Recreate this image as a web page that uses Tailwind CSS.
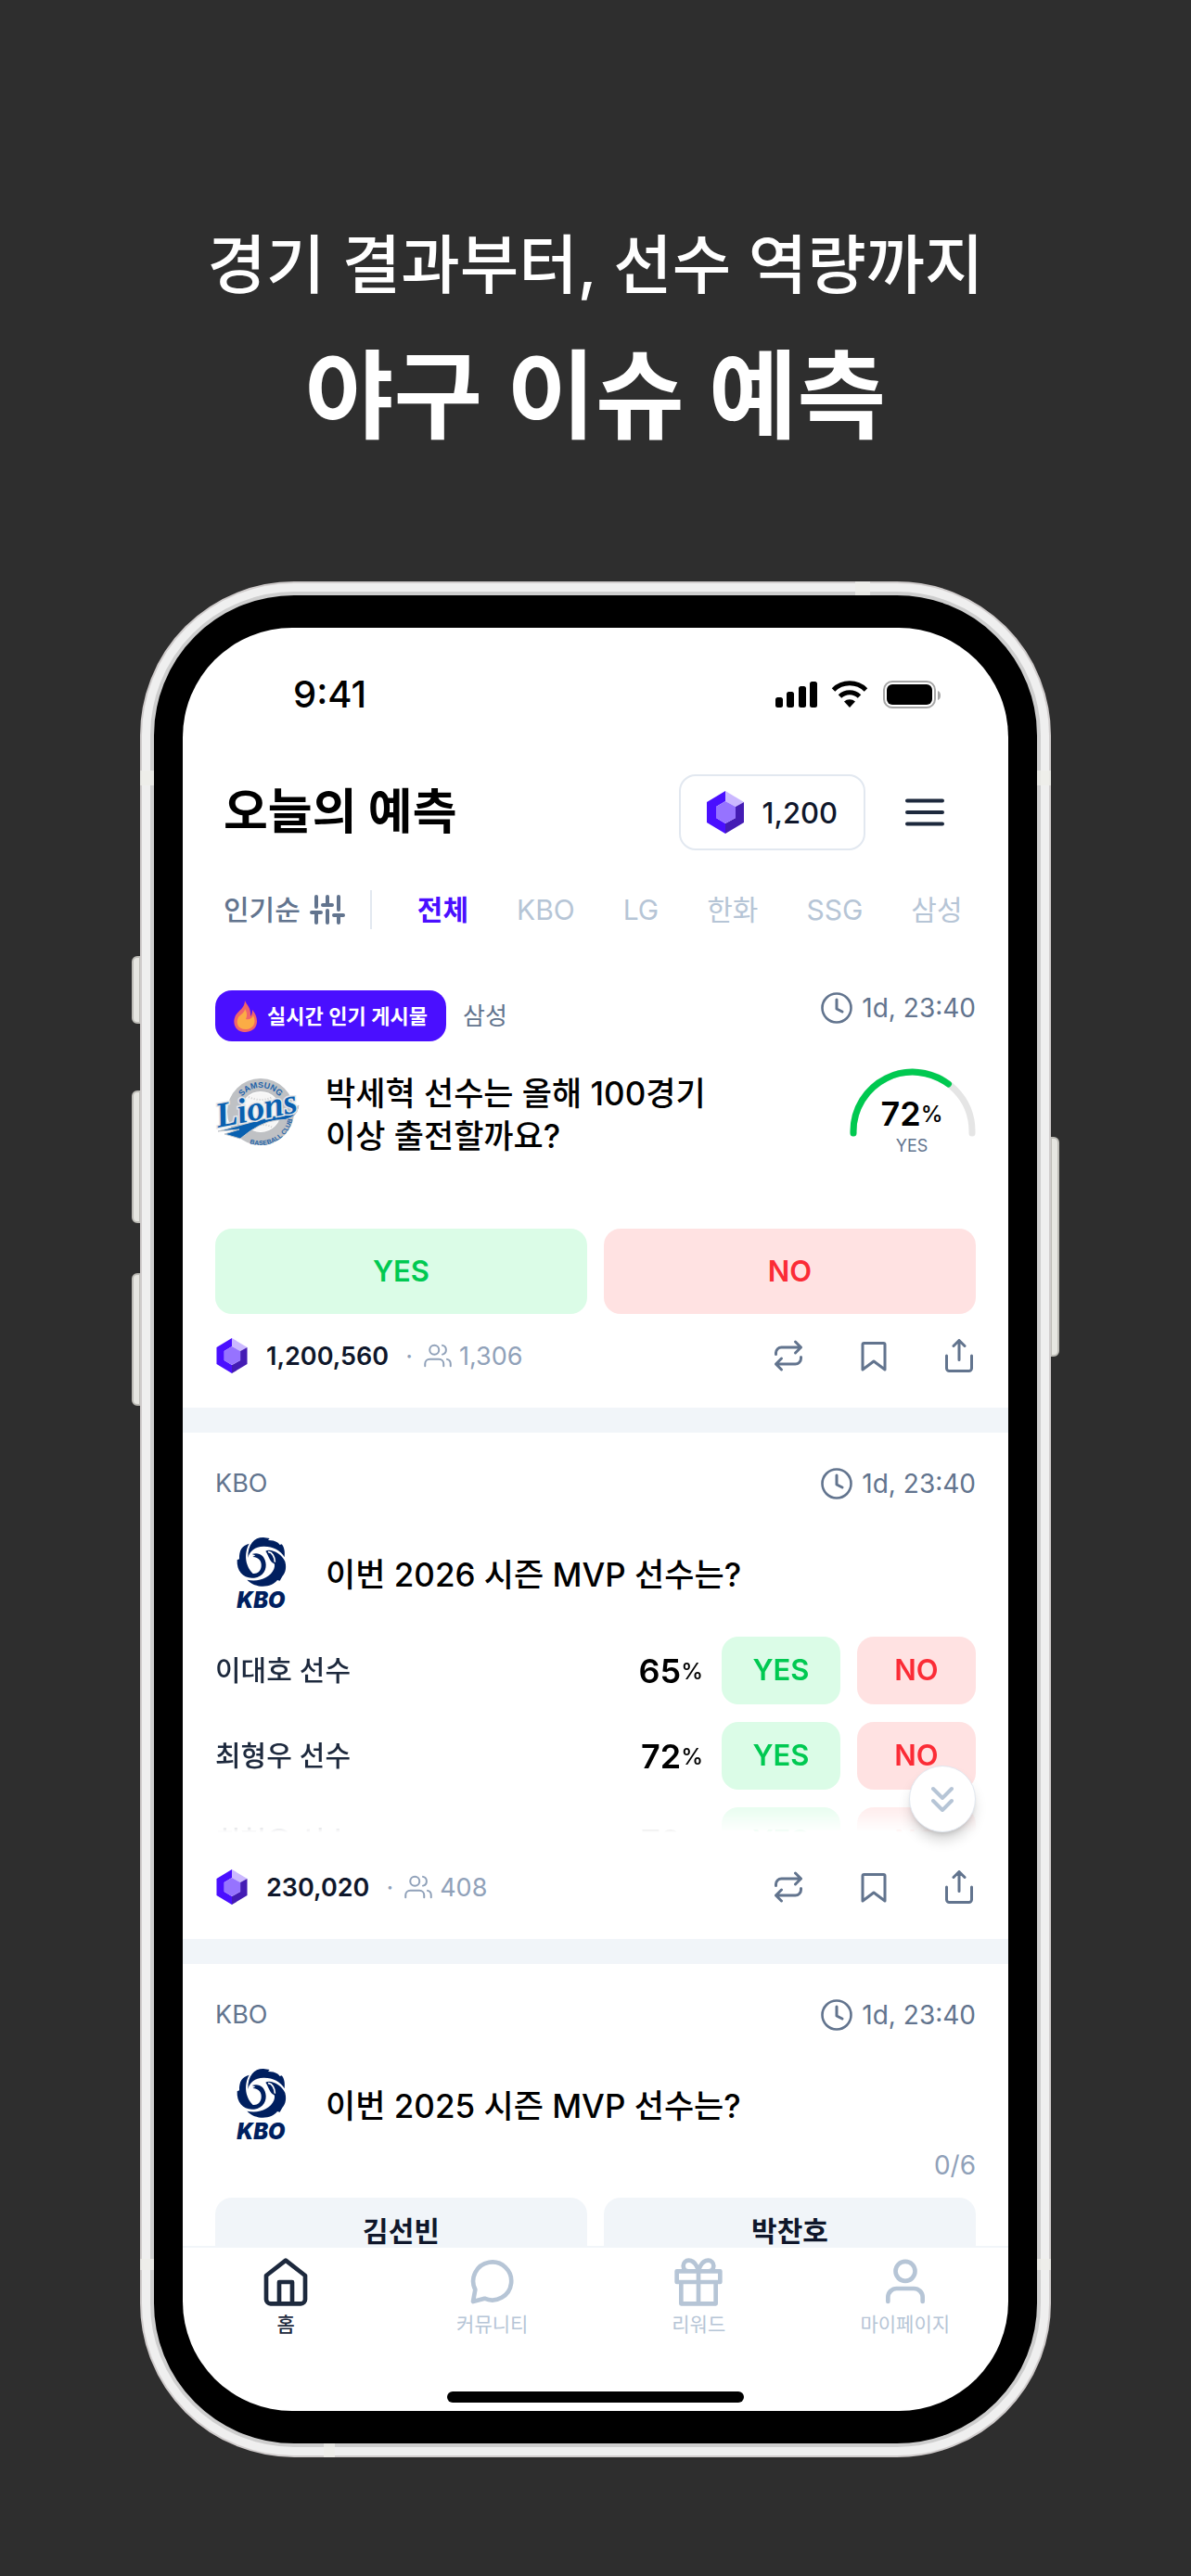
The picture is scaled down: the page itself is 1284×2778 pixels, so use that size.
<!DOCTYPE html>
<html lang="ko">
<head>
  <meta charset="UTF-8" />
  <meta name="viewport" content="width=device-width, initial-scale=1.0" />
  <title>야구 이슈 예측</title>
  <script src="https://cdn.jsdelivr.net/npm/@tailwindcss/browser@4"></script>
</head>
<body class="min-h-screen bg-[#2e2e2e] font-['Inter','Noto_Sans_CJK_KR',sans-serif] text-black">

  <!-- shared icons -->
  <svg class="hidden" aria-hidden="true">
    <symbol id="gem" viewBox="0 0 40 46">
      <path fill="#4a0fff" d="M20 0v11L10 17v12l10 6v11L0 34V12z" />
      <path fill="#cbb8ff" d="M20 0l20 12-9 5-11-6z" />
      <path fill="#441cb4" d="M40 12v22L20 46V35l11-6V17z" />
      <path fill="#9673ff" d="M20 11l11 6v12l-11 6-10-6V17z" />
    </symbol>
    <symbol id="clock" viewBox="0 0 36 36" fill="none" stroke="currentColor" stroke-linecap="round" stroke-linejoin="round">
      <circle cx="18" cy="18" r="15.5" stroke-width="2.6" />
      <path stroke-width="3" d="M18 9v10l6 3" />
    </symbol>
    <symbol id="users" viewBox="0 0 24 24" fill="none" stroke="currentColor" stroke-width="1.6" stroke-linecap="round" stroke-linejoin="round">
      <path d="M1 21v-2a4 4 0 0 1 4-4h8a4 4 0 0 1 4 4v2M23 21v-2a4 4 0 0 0-3-3.9M16 3.1a4 4 0 0 1 0 7.8" />
      <circle cx="9" cy="7" r="4" />
    </symbol>
    <symbol id="repeat" viewBox="0 0 24 24" fill="none" stroke="currentColor" stroke-width="2" stroke-linecap="round" stroke-linejoin="round">
      <path d="m17 2 4 4-4 4M3 11v-1a4 4 0 0 1 4-4h14M7 22l-4-4 4-4M21 13v1a4 4 0 0 1-4 4H3" />
    </symbol>
    <symbol id="bookmark" viewBox="0 0 24 24" fill="none" stroke="currentColor" stroke-width="2" stroke-linecap="round" stroke-linejoin="round">
      <path d="m20 22-8-6-8 6V4a1 1 0 0 1 1-1h14a1 1 0 0 1 1 1z" />
    </symbol>
    <symbol id="share" viewBox="0 0 24 24" fill="none" stroke="currentColor" stroke-width="2" stroke-linecap="round" stroke-linejoin="round">
      <path d="M3 12v9a2 2 0 0 0 2 2h14a2 2 0 0 0 2-2v-9M16 5l-4-4-4 4M12 1v14" />
    </symbol>
    <symbol id="kbo" viewBox="189 258 166 240" overflow="visible">
      <g fill="#001f5f">
        <path d="M234 330C233 284 256 263 284 264L304 267L299 273C322 272 336 284 337 288L343 286C352 296 354 312 352 328C340 305 312 292 284 293C256 294 240 307 234 330Z" />
        <path d="M238 284C214 290 205 306 206 334L199 337C197 374 220 399 254 395C284 391 296 366 291 344C286 322 270 311 247 318L258 322L249 327C270 328 279 342 277 358C275 374 264 383 250 381C220 350 224 308 238 284Z" />
        <path d="M291 308C306 298 344 316 354 342C361 368 351 384 345 390L337 404L329 402C311 426 262 432 231 401C270 409 306 394 318 366C322 355 320 350 318 348C304 342 302 325 291 308Z" />
      </g>
      <path fill="none" stroke="#fff" stroke-width="5" stroke-linecap="round" d="M301 311C312 312 320 326 321 342" />
      <text x="276" y="491" text-anchor="middle" font-family="Inter, sans-serif" font-size="71" font-weight="900" font-style="italic" fill="#001f5f">KBO</text>
    </symbol>
  </svg>

  <header class="pt-[234px] text-center text-white">
    <p class="text-[69px] leading-[104px] font-medium">경기 결과부터, 선수 역량까지</p>
    <h1 class="mt-[12px] text-[104px] leading-[154px] font-semibold">야구 이슈 예측</h1>
  </header>

  <!-- phone -->
  <main class="relative mx-auto mt-[123px] mb-32 w-full max-w-[982px]">
    <span class="absolute top-[404px] -left-[9px] h-[73px] w-[10px] rounded-l-md border-2 border-[#bdbcb6] bg-[#e6e6e1]"></span>
    <span class="absolute top-[549px] -left-[9px] h-[143px] w-[10px] rounded-l-md border-2 border-[#bdbcb6] bg-[#e6e6e1]"></span>
    <span class="absolute top-[746px] -left-[9px] h-[143px] w-[10px] rounded-l-md border-2 border-[#bdbcb6] bg-[#e6e6e1]"></span>
    <span class="absolute top-[599px] -right-[9px] h-[237px] w-[10px] rounded-r-md border-2 border-[#bdbcb6] bg-[#e6e6e1]"></span>

    <div class="relative rounded-[166px] border-2 border-[#d0cccc] bg-[#efefef] p-[9px]">
      <!-- antenna bands -->
      <span class="absolute top-[202px] -left-[2px] h-4 w-[15px] bg-[#eeede8]/80"></span>
      <span class="absolute top-[202px] -right-[2px] h-4 w-[15px] bg-[#eeede8]/80"></span>
      <span class="absolute bottom-[200px] -left-[2px] h-3 w-[15px] bg-[#eeede8]/80"></span>
      <span class="absolute -right-[2px] bottom-[200px] h-3 w-[15px] bg-[#eeede8]/80"></span>
      <span class="absolute -top-[2px] right-[193px] h-[15px] w-4 bg-[#eeede8]/80"></span>
      <span class="absolute -bottom-[2px] left-[196px] h-[15px] w-3 bg-[#eeede8]/80"></span>

      <div class="rounded-[155px] border-4 border-[#cecece] bg-black px-[31px] py-[35px]">
        <div class="overflow-hidden rounded-[118px] bg-white">

          <!-- status bar -->
          <div class="flex h-[144px] items-center justify-between pr-[71px] pl-[119px]">
            <span class="text-[40px] leading-none font-medium">9:41</span>
            <svg class="h-[30px] w-[180px]" viewBox="0 0 180 30">
              <rect x="0" y="18" width="8" height="11" rx="2.5" />
              <rect x="12" y="12" width="8" height="17" rx="2.5" />
              <rect x="25" y="6" width="8" height="23" rx="2.5" />
              <rect x="37" y="1" width="8" height="28" rx="2.5" />
              <g fill="none" stroke="#000" stroke-width="5">
                <path d="M62.500 10a25 25 0 0 1 35 0" />
                <path d="M69.500 17a15 15 0 0 1 21 0" />
              </g>
              <path d="M80 29l-6-6.500a9 9 0 0 1 12 0z" />
              <rect x="117" y="1" width="55" height="28" rx="9" fill="none" stroke="#a6a6a6" stroke-width="2" />
              <rect x="120" y="4" width="49" height="22" rx="6" />
              <path fill="#a6a6a6" d="M175 11q3 1 3 5t-3 5z" />
            </svg>
          </div>

          <!-- title -->
          <div class="flex items-center justify-between pt-[14px] pr-[60px] pl-11">
            <h2 class="text-[52px] leading-[82px] font-bold">오늘의 예측</h2>
            <div class="flex items-center gap-[34px]">
              <button type="button" class="flex h-[82px] items-center gap-[20px] rounded-[18px] border-2 border-slate-200 px-[28px] text-[31px] leading-none font-medium text-slate-900">
                <svg class="h-[46px] w-10"><use href="#gem" /></svg>1,200
              </button>
              <button type="button" aria-label="메뉴" class="grid size-[60px] place-items-center text-slate-800">
                <svg class="h-[30px] w-[42px]" viewBox="0 0 42 30" stroke="currentColor" stroke-width="4" stroke-linecap="round"><path d="M2 2.500h38M2 15h38M2 27.500h38" /></svg>
              </button>
            </div>
          </div>

          <!-- filters -->
          <nav class="mt-[43px] flex h-[42px] items-center pl-11 text-[30px] leading-none text-[#b6c5d6]">
            <button type="button" class="flex items-center gap-[10px] font-medium text-slate-500">
              인기순
              <svg class="h-8 w-[38px]" viewBox="0 0 38 32" fill="none" stroke="currentColor" stroke-width="4" stroke-linecap="round"><path d="M7 2v11M2 19h10M7 19v11M19 2v9M14 11h10M19 17v13M31 2v14M26 22h10M31 22v8" /></svg>
            </button>
            <span class="ml-[27px] h-[42px] w-[2px] bg-slate-200"></span>
            <div class="ml-[49px] flex items-center gap-[52px] whitespace-nowrap">
              <button type="button" class="font-bold text-[#4a0fff]">전체</button>
              <button type="button">KBO</button>
              <button type="button">LG</button>
              <button type="button">한화</button>
              <button type="button">SSG</button>
              <button type="button">삼성</button>
            </div>
          </nav>

          <!-- card: lions -->
          <article class="border-b-[27px] border-slate-100 px-[35px] pt-[66px] pb-[38px]">
            <div class="flex items-start justify-between text-[28px] text-slate-500">
              <div class="flex items-center gap-[18px]">
                <span class="flex h-[55px] items-center gap-[10px] rounded-[18px] bg-[#4a0fff] px-5 text-[22px] leading-none font-semibold text-white">
                  <svg class="h-[34px] w-[26px]" viewBox="0 0 26 34">
                    <path fill="#f0646a" d="M12 0C14 5 19 8 18 17C20 15 20 12 20 10C28 19 27 33 13 34C1 34-2 24 2 16C5 11 12 8 12 0Z" />
                    <path fill="#fbac45" d="M12 9C14 12 15 16 13 20C17 21 20 19 21 16C25 24 21 31 13 31C4 31 2 24 5 18C7 15 12 13 12 9Z" />
                  </svg>
                  실시간 인기 게시물
                </span>
                <span class="text-[26px]">삼성</span>
              </div>
              <time class="flex h-[38px] items-center gap-[9px]"><svg class="size-9"><use href="#clock" /></svg>1d, 23:40</time>
            </div>
            <div class="mt-[29px] flex items-center">
              <svg class="size-24 shrink-0 overflow-visible" viewBox="0 0 96 96" role="img" aria-label="Samsung Lions">
                <circle cx="49" cy="47" r="29" fill="#fff" stroke="#bfc1c4" stroke-width="14" />
                <circle cx="49" cy="47" r="21" fill="#f6f6f6" />
                <path fill="none" stroke="#ccc" stroke-width="2" stroke-dasharray="1 2" d="M36 31q13 6 26 0M40 64q12-6 22 0" />
                <path id="arc-top" fill="none" d="M23 47A26 26 0 0 1 75 47" />
                <path id="arc-bottom" fill="none" d="M34 80A36 36 0 0 0 84 52" />
                <g font-family="Liberation Sans, sans-serif" font-weight="700" fill="#1c62a8">
                  <text font-size="9"><textPath href="#arc-top" startOffset="50%" text-anchor="middle">SAMSUNG</textPath></text>
                  <text font-size="7"><textPath href="#arc-bottom" startOffset="50%" text-anchor="middle">BASEBALL CLUB</textPath></text>
                </g>
                <path fill="#0860b0" stroke="#c3c6ca" stroke-width="1" d="M3 68L62 52Q78 50 90 40Q88 57 66 56Q48 58 27 76L10 71L26 66Z" />
                <text x="3" y="64" transform="rotate(-11 3 64)" font-family="Liberation Serif, serif" font-size="38" font-weight="700" font-style="italic" fill="#0860b0" stroke="#e4e6e8" stroke-width="3" paint-order="stroke">Lions</text>
              </svg>
              <h3 class="ml-[23px] flex-1 pt-1 text-[35px] leading-[46px] font-medium">박세혁 선수는 올해 100경기<br />이상 출전할까요?</h3>
              <div class="relative h-24 w-[138px]">
                <svg class="h-[76px] w-full" viewBox="0 0 138 76" fill="none" stroke-width="7" stroke-linecap="round">
                  <path stroke="#e5e5e5" d="M6 70v-2a64 64 0 0 1 128 0v2" />
                  <path stroke="#00c950" d="M6 70v-2a64 64 0 0 1 102.500-51" />
                </svg>
                <div class="absolute inset-x-0 top-[31px] text-center">
                  <p class="text-[36px] leading-9 font-semibold">72<span class="align-[4px] text-[24px] font-medium">%</span></p>
                  <p class="mt-1 text-[18px] leading-6 text-slate-500">YES</p>
                </div>
              </div>
            </div>
            <div class="mt-[77px] grid grid-cols-2 gap-[18px] text-[31px] font-semibold">
              <button type="button" class="h-[92px] rounded-[18px] bg-green-100 text-green-500">YES</button>
              <button type="button" class="h-[92px] rounded-[18px] bg-red-100 text-red-500">NO</button>
            </div>
            <footer class="mt-[27px] flex h-9 items-center text-[27px] leading-none text-slate-400">
              <svg class="mr-[19px] h-[38px] w-9"><use href="#gem" /></svg>
              <span class="font-semibold text-slate-900">1,200,560</span>
              <span class="mr-[12px] ml-[18px]">·</span>
              <svg class="mr-2 size-[30px]"><use href="#users" /></svg>1,306
              <div class="ml-auto flex gap-14 text-slate-500">
                <button type="button" aria-label="다시 올리기"><svg class="size-9"><use href="#repeat" /></svg></button>
                <button type="button" aria-label="저장"><svg class="size-9"><use href="#bookmark" /></svg></button>
                <button type="button" aria-label="공유"><svg class="size-9"><use href="#share" /></svg></button>
              </div>
            </footer>
          </article>

          <!-- card: 2026 mvp -->
          <article class="border-b-[27px] border-slate-100 px-[35px] pt-9 pb-[38px]">
            <div class="flex h-[38px] items-center justify-between text-[28px] text-slate-500">
              <span class="text-[27px]">KBO</span>
              <time class="flex items-center gap-[9px]"><svg class="size-9"><use href="#clock" /></svg>1d, 23:40</time>
            </div>
            <div class="mt-[29px] flex items-center">
              <svg class="h-24 w-24 py-2" role="img" aria-label="KBO"><use href="#kbo" /></svg>
              <h3 class="ml-[23px] pt-1 text-[35px] leading-[46px] font-medium">이번 2026 시즌 MVP 선수는?</h3>
            </div>
            <div class="relative mt-[21px]">
              <ul class="flex h-[211px] flex-col gap-[19px] overflow-hidden mask-b-from-80% mask-b-to-100% text-[30px] font-medium text-slate-800">
                <li class="flex h-[73px] shrink-0 items-center">
                  <span class="flex-1">이대호 선수</span>
                  <span class="mr-[20px] text-[36px] font-semibold text-black">65<span class="align-[4px] text-[24px] font-medium">%</span></span>
                  <button type="button" class="mr-[18px] h-full w-[128px] rounded-[18px] bg-green-100 text-[31px] font-semibold text-green-500">YES</button>
                  <button type="button" class="h-full w-[128px] rounded-[18px] bg-red-100 text-[31px] font-semibold text-red-500">NO</button>
                </li>
                <li class="flex h-[73px] shrink-0 items-center">
                  <span class="flex-1">최형우 선수</span>
                  <span class="mr-[20px] text-[36px] font-semibold text-black">72<span class="align-[4px] text-[24px] font-medium">%</span></span>
                  <button type="button" class="mr-[18px] h-full w-[128px] rounded-[18px] bg-green-100 text-[31px] font-semibold text-green-500">YES</button>
                  <button type="button" class="h-full w-[128px] rounded-[18px] bg-red-100 text-[31px] font-semibold text-red-500">NO</button>
                </li>
                <li class="flex h-[73px] shrink-0 items-center">
                  <span class="flex-1">최형우 선수</span>
                  <span class="mr-[20px] text-[36px] font-semibold text-black">72<span class="align-[4px] text-[24px] font-medium">%</span></span>
                  <button type="button" class="mr-[18px] h-full w-[128px] rounded-[18px] bg-green-100 text-[31px] font-semibold text-green-500">YES</button>
                  <button type="button" class="h-full w-[128px] rounded-[18px] bg-red-100 text-[31px] font-semibold text-red-500">NO</button>
                </li>
              </ul>
              <button type="button" aria-label="더 보기" class="absolute right-0 bottom-0 grid size-[72px] place-items-center rounded-full border border-slate-200 bg-white text-[#b6c5d6] shadow-lg shadow-black/20">
                <svg class="h-7 w-6" viewBox="0 0 24 28" fill="none" stroke="currentColor" stroke-width="4" stroke-linecap="round" stroke-linejoin="round"><path d="m2 3 10 10L22 3M2 16l10 10 10-10" /></svg>
              </button>
            </div>
            <footer class="mt-[41px] flex h-9 items-center text-[27px] leading-none text-slate-400">
              <svg class="mr-[19px] h-[38px] w-9"><use href="#gem" /></svg>
              <span class="font-semibold text-slate-900">230,020</span>
              <span class="mr-[12px] ml-[18px]">·</span>
              <svg class="mr-2 size-[30px]"><use href="#users" /></svg>408
              <div class="ml-auto flex gap-14 text-slate-500">
                <button type="button" aria-label="다시 올리기"><svg class="size-9"><use href="#repeat" /></svg></button>
                <button type="button" aria-label="저장"><svg class="size-9"><use href="#bookmark" /></svg></button>
                <button type="button" aria-label="공유"><svg class="size-9"><use href="#share" /></svg></button>
              </div>
            </footer>
          </article>

          <!-- card: 2025 mvp, cut off by the tab bar -->
          <article class="px-[35px] pt-9">
            <div class="flex h-[38px] items-center justify-between text-[28px] text-slate-500">
              <span class="text-[27px]">KBO</span>
              <time class="flex items-center gap-[9px]"><svg class="size-9"><use href="#clock" /></svg>1d, 23:40</time>
            </div>
            <div class="mt-[29px] flex items-center">
              <svg class="h-24 w-24 py-2" role="img" aria-label="KBO"><use href="#kbo" /></svg>
              <h3 class="ml-[23px] pt-1 text-[35px] leading-[46px] font-medium">이번 2025 시즌 MVP 선수는?</h3>
            </div>
            <p class="mt-1 text-right text-[28px] leading-7 text-slate-400">0/6</p>
            <div class="mt-[21px] grid h-[52px] grid-cols-2 gap-[18px] overflow-hidden text-[30px] font-semibold text-slate-900">
              <button type="button" class="h-[72px] rounded-[18px] bg-slate-100">김선빈</button>
              <button type="button" class="h-[72px] rounded-[18px] bg-slate-100">박찬호</button>
            </div>
          </article>

          <!-- tab bar -->
          <nav class="border-t-2 border-slate-100 pb-[9px]">
            <div class="grid grid-cols-4 pt-[9px] text-[21px] leading-7 text-[#b6c5d6]">
              <a href="#" class="flex flex-col items-center gap-1 font-medium text-slate-800">
                <svg class="size-14" viewBox="0 0 24 24" fill="none" stroke="currentColor" stroke-width="2" stroke-linecap="round" stroke-linejoin="round"><path d="M3 9l9-7 9 7v11a2 2 0 0 1-2 2H5a2 2 0 0 1-2-2zM9 22v-10h6v10" /></svg>
                홈
              </a>
              <a href="#" class="flex flex-col items-center gap-1">
                <svg class="size-14" viewBox="0 0 24 24" fill="none" stroke="currentColor" stroke-width="2" stroke-linecap="round" stroke-linejoin="round"><path d="M4 15.500A8.800 8.800 0 1 1 8.300 19.600L3 21z" /></svg>
                커뮤니티
              </a>
              <a href="#" class="flex flex-col items-center gap-1">
                <svg class="size-14" viewBox="0 0 24 24" fill="none" stroke="currentColor" stroke-width="2" stroke-linecap="round" stroke-linejoin="round"><path d="M20 12v10H4V12M2 7h20v5H2zM12 22V7M12 7H7.500a2.500 2.500 0 0 1 0-5C11 2 12 7 12 7zM12 7h4.500a2.500 2.500 0 0 0 0-5C13 2 12 7 12 7z" /></svg>
                리워드
              </a>
              <a href="#" class="flex flex-col items-center gap-1">
                <svg class="size-14" viewBox="0 0 24 24" fill="none" stroke="currentColor" stroke-width="2" stroke-linecap="round" stroke-linejoin="round"><path d="M20 21v-2a4 4 0 0 0-4-4H8a4 4 0 0 0-4 4v2" /><circle cx="12" cy="7" r="4.500" /></svg>
                마이페이지
              </a>
            </div>
            <div class="mx-auto mt-[58px] h-3 w-[320px] rounded-full bg-black"></div>
          </nav>

        </div>
      </div>
    </div>
  </main>
</body>
</html>
